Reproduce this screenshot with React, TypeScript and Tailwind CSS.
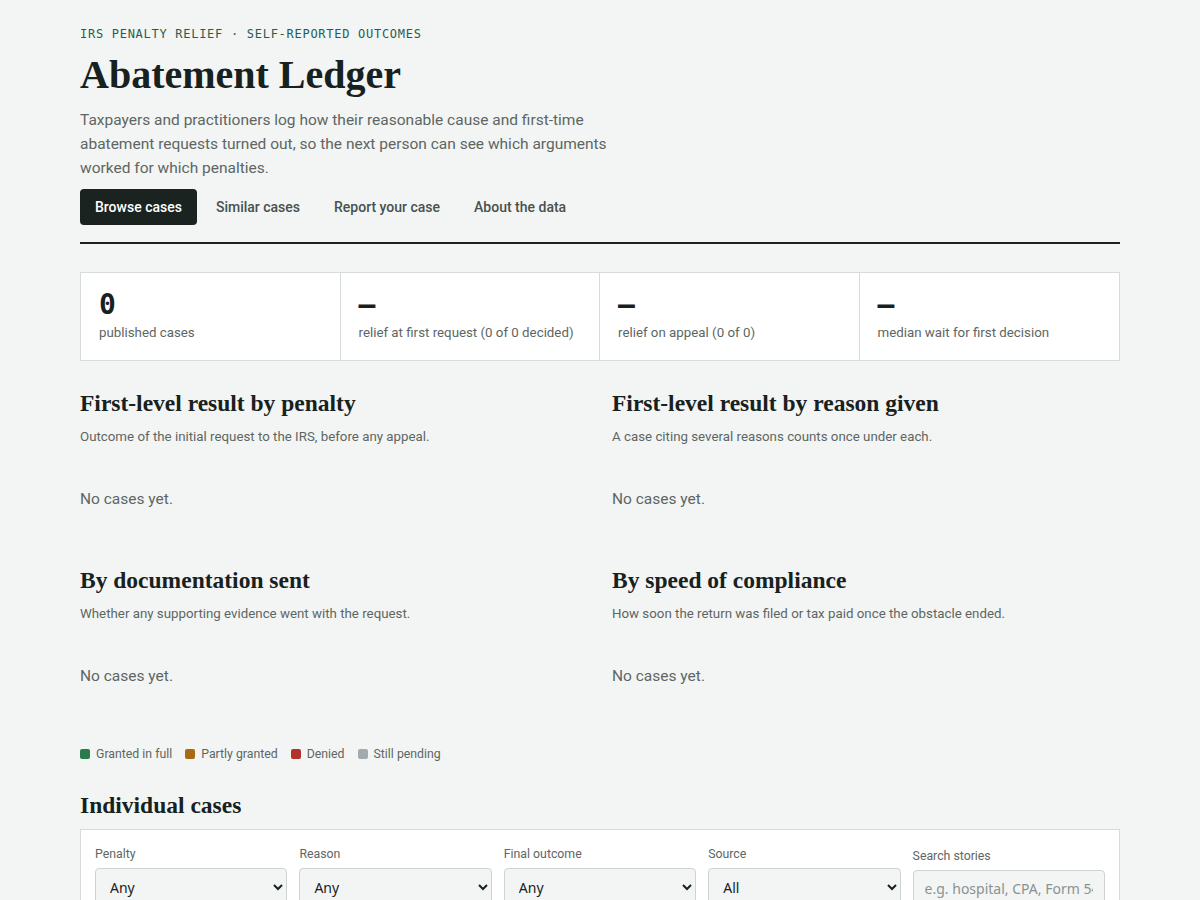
import React from "react";

const sans = "font-['Roboto','Noto_Sans',sans-serif]";
const serif = "font-['Liberation_Serif',serif]";
const mono = "font-['DejaVu_Sans_Mono','Liberation_Mono',monospace]";

function Stat({ value, label, last }: { value: string; label: string; last?: boolean }) {
  return (
    <div className={`px-[18px] pt-[14px] pb-[17px] ${last ? "" : "border-r border-[#d6dcda]"}`}>
      <div className={`${mono} font-semibold text-[28px] leading-[36px] text-[#17211e]`}>{value}</div>
      <div className="text-[13.3px] leading-[20px] text-[#5d6663]">{label}</div>
    </div>
  );
}

function Panel({ title, sub }: { title: string; sub: string }) {
  return (
    <div>
      <h2 className={`${serif} font-bold text-[23.5px] leading-[30px] text-[#17211e]`}>{title}</h2>
      <p className="text-[13.3px] leading-[20px] text-[#5d6663] mt-[9px]">{sub}</p>
      <p className="text-[15.5px] leading-[24px] text-[#5d6663] mt-[40px]">No cases yet.</p>
    </div>
  );
}

function Field({ label, value, options }: { label: string; value: string; options: string[] }) {
  return (
    <label className="flex flex-col">
      <span className="text-[12.3px] leading-[18px] text-[#5d6663] mb-[5px]">{label}</span>
      <select
        defaultValue={value}
        className="h-[38px] w-full rounded-[4px] border border-[#cdd4d1] bg-[#f3f5f4] px-[10px] text-[14px] text-[#17211e] font-['Noto_Sans',sans-serif]"
      >
        {options.map((o) => (
          <option key={o}>{o}</option>
        ))}
      </select>
    </label>
  );
}

export default function App() {
  return (
    <div className={`min-h-screen bg-[#f3f5f4] ${sans} text-[#17211e]`}>
      <div className="mx-auto w-[1040px] pt-[25px]">
        <div className={`${mono} text-[12px] leading-[18px] tracking-[0.06em] text-[#1f5f50]`}>
          IRS PENALTY RELIEF · SELF-REPORTED OUTCOMES
        </div>
        <h1 className={`${serif} font-bold text-[40px] leading-[52px] mt-[6px] text-[#17211e]`}>
          Abatement Ledger
        </h1>
        <p className="text-[15.5px] leading-[24px] text-[#5d6663] mt-[7px] w-[545px]">
          Taxpayers and practitioners log how their reasonable cause and first-time abatement
          requests turned out, so the next person can see which arguments worked for which
          penalties.
        </p>
        <nav className="flex gap-[4px] mt-[9px]">
          <span className="h-[36px] flex items-center px-[15px] rounded-[4px] bg-[#1a2320] text-white text-[14px] font-medium">
            Browse cases
          </span>
          {["Similar cases", "Report your case", "About the data"].map((t) => (
            <span key={t} className="h-[36px] flex items-center px-[15px] text-[14px] font-medium text-[#48514e]">
              {t}
            </span>
          ))}
        </nav>
        <div className="h-[2px] bg-[#1a2320] mt-[17px]" />

        <div className="grid grid-cols-4 mt-[28px] bg-white border border-[#d6dcda]">
          <Stat value="0" label="published cases" />
          <Stat value="—" label="relief at first request (0 of 0 decided)" />
          <Stat value="—" label="relief on appeal (0 of 0)" />
          <Stat value="—" label="median wait for first decision" last />
        </div>

        <div className="grid grid-cols-2 gap-x-[24px] gap-y-[54px] mt-[27px]">
          <Panel title="First-level result by penalty" sub="Outcome of the initial request to the IRS, before any appeal." />
          <Panel title="First-level result by reason given" sub="A case citing several reasons counts once under each." />
          <Panel title="By documentation sent" sub="Whether any supporting evidence went with the request." />
          <Panel title="By speed of compliance" sub="How soon the return was filed or tax paid once the obstacle ended." />
        </div>

        <div className="flex items-center gap-[13px] mt-[57px] text-[12.3px] leading-[18px] text-[#5d6663]">
          {[
            ["bg-[#2b7a4b]", "Granted in full"],
            ["bg-[#a86a12]", "Partly granted"],
            ["bg-[#b3332c]", "Denied"],
            ["bg-[#a3aaae]", "Still pending"],
          ].map(([c, t]) => (
            <span key={t} className="flex items-center gap-[6px]">
              <span className={`w-[10px] h-[10px] rounded-[2px] ${c}`} />
              {t}
            </span>
          ))}
        </div>

        <h2 className={`${serif} font-bold text-[23.5px] leading-[30px] mt-[27px]`}>Individual cases</h2>
        <div className="mt-[9px] bg-white border border-[#d6dcda] px-[14px] pt-[15px] pb-[16px]">
          <div className="grid grid-cols-5 gap-[12px] items-end">
            <Field label="Penalty" value="Any" options={["Any"]} />
            <Field label="Reason" value="Any" options={["Any"]} />
            <Field label="Final outcome" value="Any" options={["Any"]} />
            <Field label="Source" value="All" options={["All"]} />
            <label className="flex flex-col">
              <span className="text-[12.3px] leading-[18px] text-[#5d6663] mb-[5px]">Search stories</span>
              <input
                placeholder="e.g. hospital, CPA, Form 5472"
                className="h-[36px] w-full rounded-[4px] border border-[#cdd4d1] bg-[#f3f5f4] px-[11px] text-[14px] placeholder:text-[#8a928f] font-['Noto_Sans',sans-serif]"
              />
            </label>
          </div>
        </div>
      </div>
    </div>
  );
}
